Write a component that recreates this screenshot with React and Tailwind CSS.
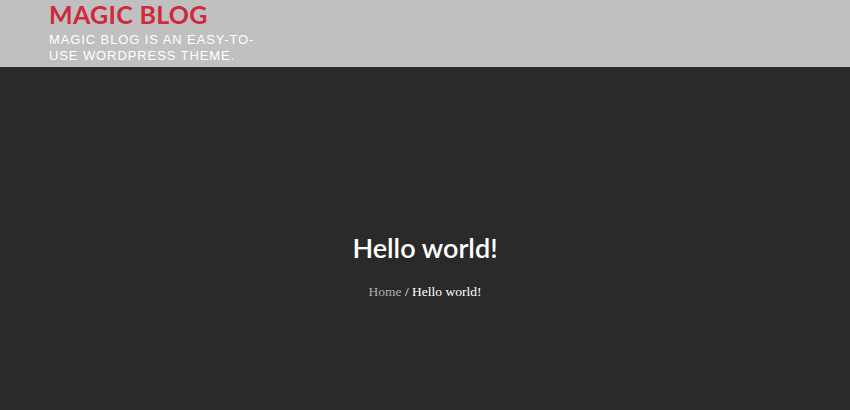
import React from 'react';

export default function App() {
  return (
    <div className="w-[850px] h-[410px] flex flex-col bg-[#2a2a2a]">
      {/* cabecera */}
      <header className="h-[67px] bg-[#c0c0c0] px-[49px]">
        <h1 className="text-[25px] leading-[28px] font-bold text-[#d0283c] tracking-[0.3px] font-['Lato',sans-serif]">
          MAGIC BLOG
        </h1>
        <p className="mt-[4px] w-[215px] text-[13px] leading-[16px] text-white uppercase tracking-[0.9px] font-['Liberation_Sans',Arial,sans-serif]">
          Magic blog is an easy-to-use WordPress theme.
        </p>
      </header>

      {/* banner */}
      <section className="flex-1 flex flex-col items-center pt-[164px]">
        <h2 className="text-[27px] leading-[34px] font-semibold text-white font-['Lato',sans-serif]">
          Hello world!
        </h2>
        <div className="mt-[18px] text-[13.5px] leading-[18px] font-['Liberation_Serif',serif]">
          <span className="text-[#b0b0b0]">Home</span>
          <span className="text-white"> / Hello world!</span>
        </div>
      </section>
    </div>
  );
}
